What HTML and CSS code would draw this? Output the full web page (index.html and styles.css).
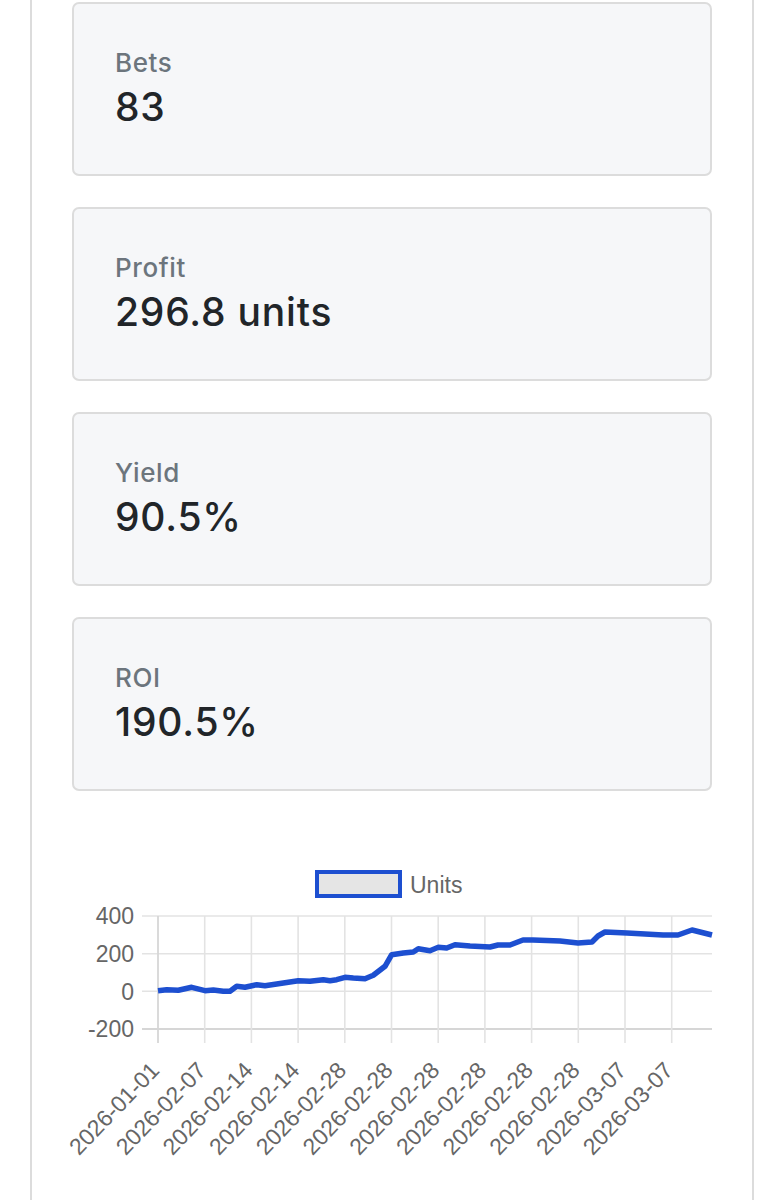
FILE: index.html
```html
<!DOCTYPE html>
<html lang="en">
<head>
<meta charset="utf-8">
<title>Stats</title>
<link rel="stylesheet" href="styles.css">
</head>
<body>
<main class="panel">
  <section class="stats">
    <div class="stat-card">
      <div class="stat-label">Bets</div>
      <div class="stat-value">83</div>
    </div>
    <div class="stat-card">
      <div class="stat-label">Profit</div>
      <div class="stat-value">296.8 units</div>
    </div>
    <div class="stat-card">
      <div class="stat-label">Yield</div>
      <div class="stat-value">90.5%</div>
    </div>
    <div class="stat-card">
      <div class="stat-label">ROI</div>
      <div class="stat-value">190.5%</div>
    </div>
  </section>
  <section class="chart">
    <svg class="chart-svg" width="640" height="370" viewBox="72 830 640 370" xmlns="http://www.w3.org/2000/svg">
      <!-- legend -->
      <rect x="317" y="874" width="83" height="24" fill="#e5e5e5" stroke="#1d4fd0" stroke-width="4"/>
      <text class="legend-text" x="410" y="895">Units</text>
      <!-- horizontal grid -->
      <g stroke="#e3e3e3" stroke-width="1.6">
        <line x1="142" y1="918" x2="712" y2="918"/>
        <line x1="142" y1="955.7" x2="712" y2="955.7"/>
        <line x1="142" y1="993.3" x2="712" y2="993.3"/>
      </g>
      <line x1="142" y1="1031" x2="712" y2="1031" stroke="#d6d6d6" stroke-width="1.8"/>
      <!-- vertical grid -->
      <g stroke="#e3e3e3" stroke-width="1.6">
        <line x1="204.7" y1="918" x2="204.7" y2="1045"/>
        <line x1="251.4" y1="918" x2="251.4" y2="1045"/>
        <line x1="298.1" y1="918" x2="298.1" y2="1045"/>
        <line x1="344.8" y1="918" x2="344.8" y2="1045"/>
        <line x1="391.5" y1="918" x2="391.5" y2="1045"/>
        <line x1="438.2" y1="918" x2="438.2" y2="1045"/>
        <line x1="484.9" y1="918" x2="484.9" y2="1045"/>
        <line x1="531.6" y1="918" x2="531.6" y2="1045"/>
        <line x1="578.3" y1="918" x2="578.3" y2="1045"/>
        <line x1="625" y1="918" x2="625" y2="1045"/>
        <line x1="671.7" y1="918" x2="671.7" y2="1045"/>
      </g>
      <line x1="158" y1="918" x2="158" y2="1045" stroke="#d6d6d6" stroke-width="1.8"/>
      <!-- y labels -->
      <g class="tick-text" text-anchor="end">
        <text x="134" y="926.3">400</text>
        <text x="134" y="964">200</text>
        <text x="134" y="1001.6">0</text>
        <text x="134" y="1039.3">-200</text>
      </g>
      <!-- x labels -->
      <g class="tick-text" text-anchor="end" dominant-baseline="central">
        <text transform="translate(155 1068) rotate(-46)">2026-01-01</text>
        <text transform="translate(201.7 1068) rotate(-46)">2026-02-07</text>
        <text transform="translate(248.4 1068) rotate(-46)">2026-02-14</text>
        <text transform="translate(295.1 1068) rotate(-46)">2026-02-14</text>
        <text transform="translate(341.8 1068) rotate(-46)">2026-02-28</text>
        <text transform="translate(388.5 1068) rotate(-46)">2026-02-28</text>
        <text transform="translate(435.2 1068) rotate(-46)">2026-02-28</text>
        <text transform="translate(481.9 1068) rotate(-46)">2026-02-28</text>
        <text transform="translate(528.6 1068) rotate(-46)">2026-02-28</text>
        <text transform="translate(575.3 1068) rotate(-46)">2026-02-28</text>
        <text transform="translate(622 1068) rotate(-46)">2026-03-07</text>
        <text transform="translate(668.7 1068) rotate(-46)">2026-03-07</text>
      </g>
      <!-- data line -->
      <polyline fill="none" stroke="#1d4fd0" stroke-width="5.5" stroke-linejoin="round" stroke-linecap="butt"
        points="158,992.7 166.7,991.7 178.3,992.3 191.7,989.3 205,992.7 213.3,992 223.3,993.3 230,993.3 236.7,988.3 245,989.3 256.7,986.7 265,987.7 276.7,986 290,984 298.3,982.7 310,983.3 323.3,981.7 330,982.7 336.7,981.7 345,979.3 353.3,980 365,980.7 373.3,977.3 385,968.3 391.7,956.7 403.3,955 413.3,954 418.3,950.7 430,952.7 438.3,949.3 446.7,950 455,946.7 470,948 490,949 498,947 510,947 523,942 533,942 560,943 578,945 592,944 598,938 605,934 627,935 663,937 670,937 678,937 692,932 712,937"/>
    </svg>
  </section>
</main>
</body>
</html>
```

FILE: styles.css
```css
html, body {
  margin: 0;
  padding: 0;
  background: #ffffff;
}

body {
  font-family: Inter, "Liberation Sans", Arial, sans-serif;
}

.panel {
  margin: 0 30px;
  min-height: 1200px;
  box-sizing: border-box;
  border-left: 2px solid #dcdcdc;
  border-right: 2px solid #dcdcdc;
  padding: 2px 40px 0 40px;
  background: #ffffff;
}

.stats {
  display: flex;
  flex-direction: column;
  gap: 31px;
}

.stat-card {
  box-sizing: border-box;
  height: 174px;
  background: #f6f7f9;
  border: 2px solid #dcdcdc;
  border-radius: 7px;
  padding: 44px 40px 44px 41px;
}

.stat-label {
  font-size: 26px;
  line-height: 30px;
  letter-spacing: 0.6px;
  color: #6c757d;
  font-weight: 500;
}

.stat-value {
  margin-top: 6px;
  font-size: 39px;
  line-height: 46px;
  letter-spacing: 0.8px;
  color: #212529;
  font-weight: 500;
}

.chart {
  margin-top: 37px;
}

.chart-svg {
  display: block;
  overflow: visible;
}

.legend-text {
  font-family: "Liberation Sans", Arial, sans-serif;
  font-size: 23px;
  fill: #666666;
}

.tick-text {
  font-family: "Liberation Sans", Arial, sans-serif;
  font-size: 23px;
  fill: #666666;
}
```
